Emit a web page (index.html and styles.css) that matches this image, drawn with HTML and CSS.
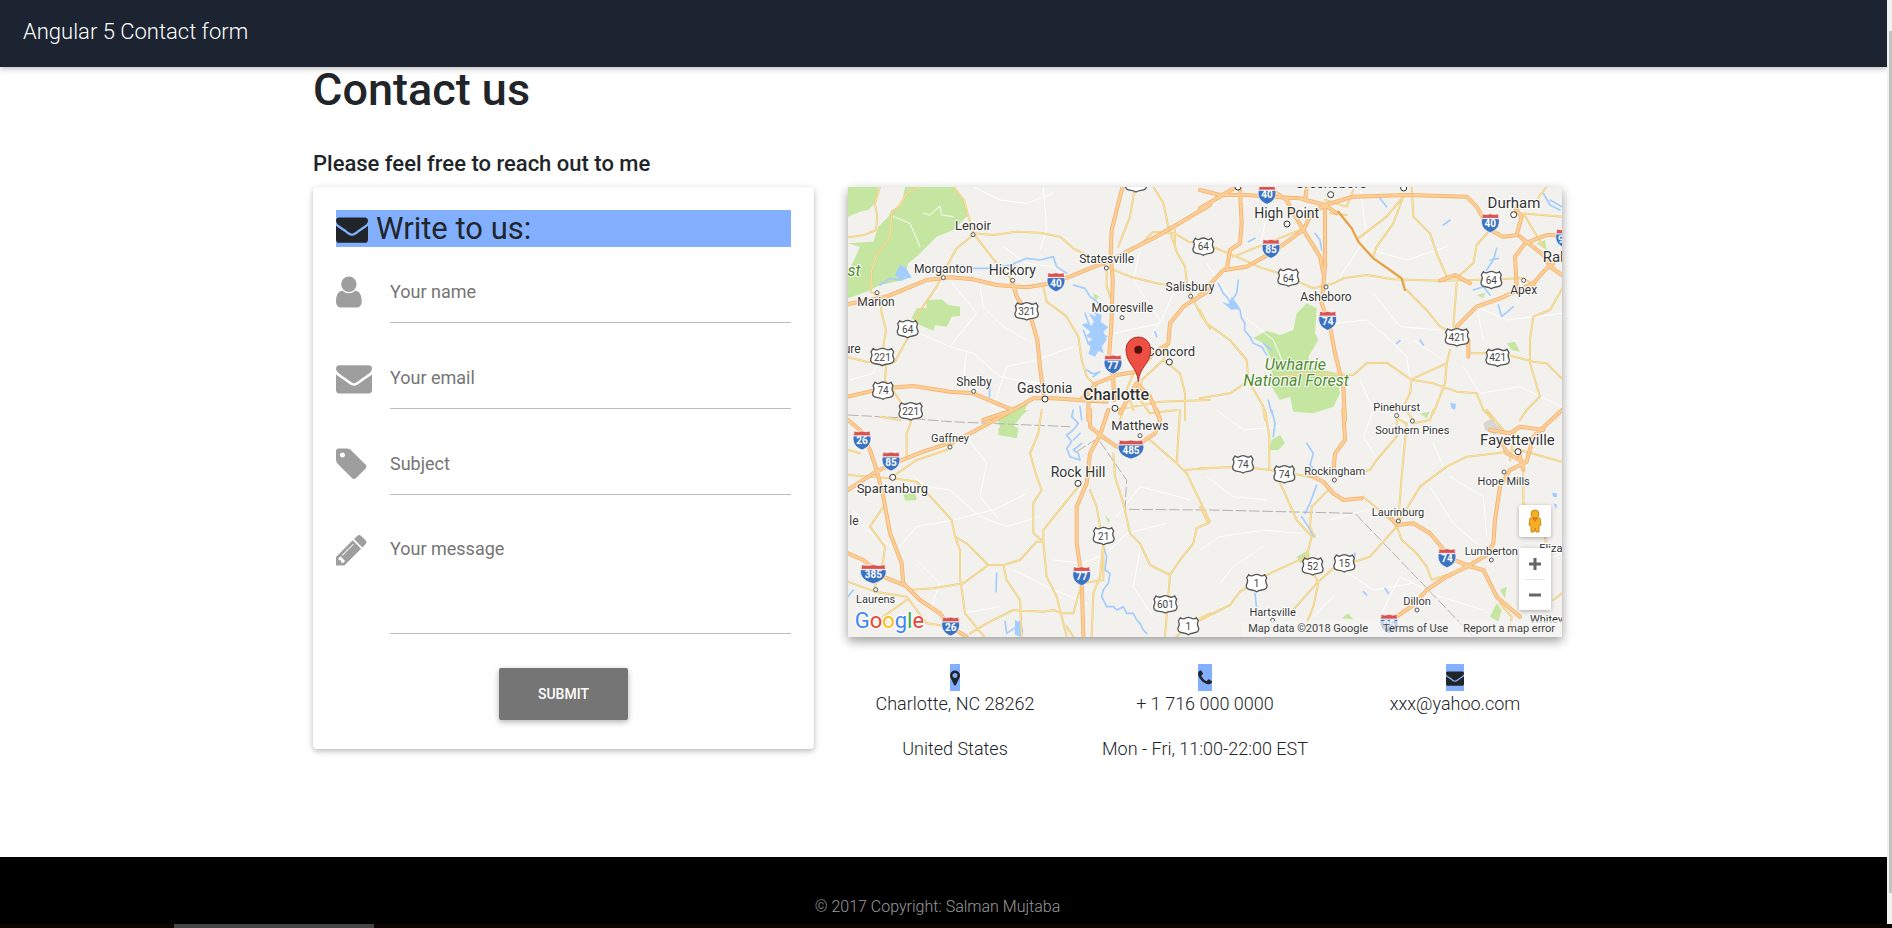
FILE: index.html
```html
<!DOCTYPE html>
<html lang="en">
<head>
<meta charset="utf-8">
<meta name="viewport" content="width=device-width, initial-scale=1">
<title>Angular 5 Contact form</title>
<link rel="stylesheet" href="styles.css">
</head>
<body>
<svg class="sprite" aria-hidden="true">
  <symbol id="i-envelope" viewBox="0 0 1792 1792"><path d="M1792 710v794q0 66-47 113t-113 47h-1472q-66 0-113-47t-47-113v-794q44 49 101 87 362 246 497 345 57 42 92.500 65.500t94.500 48 110 24.500h2q51 0 110-24.500t94.500-48 92.500-65.500q170-123 498-345 57-39 100-87zm0-294q0 79-49 151t-122 123q-376 261-468 325-10 7-42.500 31t-54 38.500-52 32.500-57.500 27-50 9h-2q-23 0-50-9t-57.500-27-52-32.500-54-38.500-42.500-31q-91-64-262-182.500t-205-142.500q-62-42-117-115.500t-55-136.500q0-78 41.500-130t118.500-52h1472q65 0 112.500 47t47.500 113z"/></symbol>
  <symbol id="i-user" viewBox="256 0 1792 1792"><path d="M1536 1399q0 109-62.500 187t-150.500 78h-854q-88 0-150.500-78t-62.500-187q0-85 8.500-160.500t31.500-152 58.500-131 94-89 134.500-34.500q131 128 313 128t313-128q76 0 134.500 34.500t94 89 58.500 131 31.500 152 8.500 160.500zm-256-887q0 159-112.500 271.500t-271.500 112.500-271.500-112.500-112.500-271.500 112.500-271.500 271.500-112.500 271.500 112.500 112.500 271.500z"/></symbol>
  <symbol id="i-tag" viewBox="128 0 1792 1792"><path d="M576 448q0-53-37.500-90.500t-90.500-37.500-90.500 37.500-37.500 90.500 37.500 90.500 90.500 37.500 90.500-37.500 37.500-90.500zm1067 576q0 53-37 90l-491 492q-39 37-91 37-53 0-90-37l-715-716q-38-37-64.500-101t-26.500-117v-416q0-52 38-90t90-38h416q53 0 117 26.500t102 64.500l715 714q37 39 37 91z"/></symbol>
  <symbol id="i-pencil" viewBox="128 0 1792 1792"><path d="M491 1536l91-91-235-235-91 91v107h128v128h107zm523-928q0-22-22-22-10 0-17 7l-542 542q-7 7-7 17 0 22 22 22 10 0 17-7l542-542q7-7 7-17zm-54-192l416 416-832 832h-416v-416zm683 96q0 53-37 90l-166 166-416-416 166-165q36-38 90-38 53 0 91 38l235 234q37 39 37 91z"/></symbol>
  <symbol id="i-marker" viewBox="384 0 1024 1792"><path d="M1152 640q0-106-75-181t-181-75-181 75-75 181 75 181 181 75 181-75 75-181zm256 0q0 109-33 179l-364 774q-16 33-47.500 52t-67.500 19-67.500-19-46.500-52l-365-774q-33-70-33-179 0-212 150-362t362-150 362 150 150 362z"/></symbol>
  <symbol id="i-phone" viewBox="192 0 1408 1792"><path d="M1600 1240q0 27-10 70.500t-21 68.500q-21 50-122 106-94 51-186 51-27 0-53-3.500t-57.500-12.500-47-14.500-55.500-20.500-49-18q-98-35-175-83-127-79-264-216t-216-264q-48-77-83-175-3-9-18-49t-20.500-55.500-14.500-47-12.500-57.500-3.500-53q0-92 51-186 56-101 106-122 25-11 68.500-21t70.500-10q14 0 21 3 18 6 53 76 11 19 30 54t35 63.500 31 53.500q3 4 17.500 25t21.500 35.500 7 28.500q0 20-28.500 50t-62 55-62 53-28.500 46q0 9 5 22.500t8.500 20.500 14 24 11.500 19q76 137 174 235t235 174q2 1 19 11.500t24 14 20.500 8.500 22.500 5q18 0 46-28.500t53-62 55-62 50-28.500q14 0 28.500 7t35.500 21.500 25 17.500q25 15 53.500 31t63.500 35 54 30q70 35 76 53 3 7 3 21z"/></symbol>
</svg>

<div class="window">
  <div class="page">
    <header class="navbar"><a class="brand" href="#">Angular 5 Contact form</a></header>

    <main class="content">
      <h1 class="title">Contact us</h1>
      <h2 class="subtitle">Please feel free to reach out to me</h2>
      <div class="columns">
        <form class="card">
          <h3 class="card-title"><svg class="card-icon"><use href="#i-envelope"/></svg>Write to us:</h3>
          <div class="fields">
            <div class="field"><label class="field-icon" for="name" aria-label="Your name"><svg class="icon"><use href="#i-user"/></svg></label><input class="input" id="name" type="text" placeholder="Your name"></div>
            <div class="field"><label class="field-icon" for="email" aria-label="Your email"><svg class="icon"><use href="#i-envelope"/></svg></label><input class="input" id="email" type="email" placeholder="Your email"></div>
            <div class="field"><label class="field-icon" for="subject" aria-label="Subject"><svg class="icon"><use href="#i-tag"/></svg></label><input class="input" id="subject" type="text" placeholder="Subject"></div>
            <div class="field"><label class="field-icon" for="message" aria-label="Your message"><svg class="icon"><use href="#i-pencil"/></svg></label><textarea class="input message" id="message" placeholder="Your message"></textarea></div>
          </div>
          <button class="submit" type="submit">SUBMIT</button>
        </form>

        <section class="side">
          <div class="map">
            <svg class="map-art" viewBox="0 0 2142 1350" preserveAspectRatio="xMidYMid slice" role="img" aria-label="Map of Charlotte, North Carolina">
              <defs>
                <g id="minor">
                  <path transform="translate(-24 -21)" d="M24 172L70 166 108 150 112 110 105 70 120 20M240 20L200 40 180 75 155 100 150 170 110 225 95 270 92 335 120 350 125 400 138 450 130 500 138 560 135 600 150 620 185 670 210 720M340 20L372 60 384 105 400 160 470 250 517 300M400 160L460 165 530 155 600 158 660 170 700 205 760 235 810 265 870 290 960 312 1050 315M400 165L350 205 320 260 290 320 235 400 205 470 165 545 130 550 80 545 24 532M885 20L870 110 835 200M940 20L970 70 985 140 1010 215 1035 260 1042 320 1080 400 1110 445M905 190L940 155 1005 160 1045 185 1110 190M1005 200L1005 150M610 320L620 365 680 410 715 470 725 540 740 590 770 620M800 270L800 320 815 360M985 490L970 540 905 600 900 660 930 700 1010 690M970 540L1020 580 1035 640 1035 720M880 580L860 630 880 690M1110 660L960 665 825 690M840 720L850 690"/>
                  <path transform="translate(1056 -21)" d="M24 195L110 230 180 262 240 280 340 325 400 310 430 295 500 285 580 298 720 302 820 300 970 295 1010 320M100 230L300 150M0 390L20 430 90 480 140 540 145 600 190 680 195 720M0 655L90 640 150 600 320 580 460 585 500 550 560 548 635 600 630 640 610 680 640 720M610 50L580 130 530 200 520 230M475 175L560 110 605 55M635 20L640 110 690 160 710 220 740 290M770 310L760 440M870 150L830 195 820 250 780 285M620 330L680 390 720 440 800 480 810 520 900 520 1000 545 1040 550 1090 600M640 595L740 550 750 510M740 550L735 610 700 700M640 600L700 610 770 635 830 640 850 690 880 720M1090 320L1050 390 1000 410 990 480 990 550 1020 650 980 690 960 720M970 100L1000 150 1030 200M375 60L440 80 460 30M390 100L440 105M970 100L1086 110M1010 60L1040 20"/>
                  <path transform="translate(-24 669)" d="M24 120L60 130M24 195L150 205 230 150 320 120 360 80M215 30L200 70 200 140M160 205L230 215 290 280 335 330 345 380 360 420 360 500 375 610 400 640 440 690M130 290L90 350 135 410 130 450 105 530M345 380L380 400 445 465 490 465 500 510 540 570 545 680M205 540L280 535 370 520 445 465M490 465L540 450 590 395 610 395 610 360 650 310 715 230M605 0L595 70 570 130 590 200 605 240 580 280 580 370 610 395 620 500 650 560 665 620 680 680M390 670L440 640 520 600 610 605 640 600 665 610 700 610 725 520M790 400L780 500 760 550 755 680M790 400L790 510 725 520M24 515L105 545 200 560 260 640 330 650M200 570L130 620M750 240L770 290 780 350M820 130L825 200 850 280 870 370 900 400 930 465 990 495 975 680M930 90L1010 160 1040 190 1110 335 1070 355 1060 400 1020 450 990 495M1020 0L1010 160M1030 180L1110 175M745 0L750 50M120 20L180 30M1110 610L1050 640 1010 680M700 680L680 650"/>
                  <path transform="translate(1056 669)" d="M0 175L130 170 210 180 300 195 350 205M195 0L208 80 208 180M225 190L250 240 290 330 335 380 320 440 355 520 340 590 320 640M390 235L335 290 330 350 345 380M0 630L90 585 120 545 200 495 320 440M270 610L350 520 400 475 480 450 510 440 590 350M490 260L560 320 590 345 605 390 650 430 680 470 695 510 770 485 820 465M590 0L590 80 530 150 510 180 440 195M590 25L620 40 605 200 595 330M600 330L660 230 740 170 800 140 890 130 960 120 1086 155M700 0L690 30 640 40M860 0L910 60M945 60L930 150M970 190L970 280 1030 340 1040 420M0 290L25 340 0 350M1086 550L1060 570M900 580L935 620 930 660"/>
                </g>
                <g id="major">
                  <path transform="translate(-24 -21)" d="M24 372L140 350 200 325 260 300 330 292 400 298 470 315 560 322 620 312 690 290 750 265 815 240 880 205 940 175 1000 140 1110 75M848 20L830 90 815 150 812 220 818 300 815 420 808 520 820 600 822 660M515 300L530 350 575 420 592 480 600 560 610 640M430 720L520 690 580 655 640 655 720 660 745 640 765 612 830 585 890 575 940 520 985 490 990 430 1030 380 1110 330M24 650L130 625 220 618 330 635 400 640 470 670 520 690M745 720L745 660M840 700L890 610 930 650 960 720M720 660L800 665"/>
                  <path transform="translate(1056 -21)" d="M0 345L70 270 140 260 220 215 310 150 335 100 375 75 460 50 620 45 800 50 830 80 870 150 910 170 950 165 965 110 945 85M960 170L1030 225 1050 260 1086 285M950 320L945 230 975 190 1040 165 1086 165M0 30L60 45 140 45 210 50 300 55 375 75 375 160 375 260 365 370 390 440 405 520 430 620 435 720M120 30L125 130 120 190 90 210 80 270M200 20L260 60 280 100 310 150 360 230 370 280M320 20L315 60 375 75 410 100M0 85L110 20M770 440L830 380 900 355 1000 310 1035 270 1060 250M720 302L765 285 810 310M805 480L805 530"/>
                  <path transform="translate(-24 669)" d="M24 30L60 60 90 120 110 180 130 260 150 370 185 460 190 520 240 570 300 610 330 650 380 680M24 240L100 190 160 160 250 125 340 95 400 65 520 0M24 430L70 450 130 500 190 525M805 0L780 75 750 130 740 220 710 290 710 400 725 500 730 680M750 0L750 50 780 75 830 110 900 100 945 70 960 30 950 0"/>
                  <path transform="translate(1056 669)" d="M430 0L435 90 405 130 400 190M330 195L370 215 400 250 430 270 485 265M570 320L590 345 640 340 690 370 740 430M590 620L640 585 680 540 740 500 800 470 860 435 880 400 885 330 900 230 930 180 980 155 1000 80 1086 0M740 440L810 470 850 480 890 560 960 620M870 60L930 70 960 50 1030 60M905 90L920 130 960 150M955 120L970 180"/>
                </g>
              </defs>

              <rect class="land" width="2142" height="1350"/>
              <g class="park">
                <path transform="translate(-24 -21)" d="M24 190L60 200 24 280V355L80 335 120 315 190 300 205 250 235 225 290 170 340 150 384 105 370 60 340 20H195L185 75 155 90 145 110 115 140 100 185 24 190ZM24 20H115L105 70 85 90 60 95 24 110Z"/>
                <path transform="translate(-24 -21)" d="M230 385L260 385 260 360 305 358 325 375 360 380 360 408 335 410 320 440 285 435 280 452 240 435 215 415ZM470 710L530 675 565 670 540 715 500 760 480 740ZM760 340L778 350 765 362Z"/>
                <path transform="translate(1056 -21)" d="M160 475L200 452 240 465 280 450 290 400 320 370 350 385 345 460 355 480 325 530 330 560 410 580 420 640 400 680 340 700 280 695 270 650 240 660 215 620 215 540 190 490ZM920 490L945 485 960 515 935 510ZM1010 190L1035 180 1040 210ZM830 345L855 338 850 355Z"/>
                <path transform="translate(-24 669)" d="M475 55L500 35 535 55 530 85 475 75ZM190 250L225 245 230 270 195 272ZM530 0L565 0 540 20ZM795 315L810 330 805 340Z"/>
                <path transform="translate(1056 669)" d="M215 90L240 75 255 100 235 120 208 120ZM290 440L325 420 330 445 300 460ZM870 620L890 580 905 600 895 635ZM900 540L920 530 915 565ZM425 625L445 610 460 628ZM660 10L690 5 680 25Z"/>
              </g>
              <path class="town" transform="translate(1056 669)" d="M850 40L875 25 890 45 905 55 885 75 855 60Z"/>
              <g class="local">
                <path transform="translate(-24 -21)" d="M250 100L270 105 300 78 305 105 340 110M160 110L210 130 240 200M400 20L480 60 560 70 640 40M610 20L620 150 600 210M420 320L430 380 490 440 560 480M240 460L330 500 400 520 480 590 600 610M330 300L410 400 370 450 330 500M490 200L560 250 640 260 700 310M460 680L500 560 590 540 700 500M900 210L880 300 960 420 930 480M1000 340L960 430 820 460M30 600L100 580 140 480M380 510L370 600 400 640"/>
                <path transform="translate(1056 -21)" d="M20 250L120 400 220 480 250 550M400 430L500 420 560 470 620 530 630 600M430 110L480 200 620 240 740 200M520 340L600 440 720 450M850 480L830 380 920 420 1086 400M480 600L520 690 620 720M640 480L730 540M790 560L840 640 960 620 1086 680M120 60L200 110 180 200M480 20L500 170 420 290"/>
                <path transform="translate(-24 669)" d="M220 200L260 230 330 240 420 320 500 350 600 320M170 420L230 350 340 330 460 300 560 250M380 80L440 160 420 260 470 320M640 450L730 460 800 430 860 370 980 340M520 480L620 530 740 580M230 450L300 520 270 600M830 320L900 230 980 250 1050 270M900 420L880 530 940 620M40 300L80 360 170 420M370 610L480 590"/>
                <path transform="translate(1056 669)" d="M20 200L100 260 200 270M0 420L60 380 190 360 300 370M390 330L500 300 560 320M430 480L520 540 640 520M750 200L850 260 860 380M690 230L760 340 830 400M540 160L490 80 520 0M700 100L730 170M540 620L600 500 720 560 850 600M60 520L100 470 190 410M400 560L340 620M50 0L130 60 240 50M960 480L1086 430"/>
              </g>
              <g class="lake">
                <path transform="translate(-24 -21)" d="M725 435L740 428 752 440 762 425 745 398 765 410 770 398 785 405 782 425 805 442 790 455 800 480 785 500 792 520 775 512 765 530 745 522 752 500 740 490 758 478 738 468 752 455ZM180 255L195 262 205 275 215 295 195 290 185 302 165 285Z"/>
                <path transform="translate(-24 669)" d="M525 630L545 640 550 665 540 680 525 675Z"/>
                <path transform="translate(1056 669)" d="M1056 248L1070 250 1072 262 1060 260ZM1060 280L1072 284 1068 298Z"/>
                <path transform="translate(1056 -21)" d="M750 668L768 672 765 690 755 685ZM65 365L85 372 95 350 110 370 120 385 95 390Z"/>
              </g>
              <g class="river">
                <path transform="translate(-24 -21)" d="M395 265L460 265 510 255 560 235 600 240 640 230 650 260 680 280M700 315L735 325 750 350 765 360 780 375 765 400M120 315L150 295 180 300 210 290M735 400L750 440 800 470M730 450L745 490M450 615L448 650M740 570L760 582 780 575 760 590M720 680L725 720M945 455L950 470"/>
                <path transform="translate(1056 -21)" d="M55 310L70 340 80 350 100 380 120 390 125 415 135 430 133 450 150 470 160 490 185 500 200 525M115 300L110 340 90 370M190 490L215 510M345 160L360 180 365 210M860 270L880 240 890 205M870 240L895 235M820 330L850 320 870 345M895 375L905 410 940 380M1030 40L1050 75 1080 90M1050 60L1086 80M730 135L750 120M205 660L215 700M540 55L560 80M590 490L600 482M660 480L670 495M145 185L165 175"/>
                <path transform="translate(-24 669)" d="M700 0L695 20 715 40 700 60 680 75 695 95 680 115 690 140 720 150 715 130 700 120 725 100M700 90L720 70M790 410L800 440 795 480 810 490 805 520 790 540 785 560 800 590 820 590 830 600 850 590 860 610 880 610 890 630 900 640 910 660 920 670M495 635L500 670 530 650 545 625M470 490L468 545M40 540L24 560"/>
                <path transform="translate(1056 669)" d="M320 100L340 130 330 165 345 180M215 0L225 40 220 80M350 225L330 280 315 310M305 320L325 350 340 380M165 550L170 595M465 430L460 460M490 545L500 555M555 535L565 550"/>
              </g>
              <path class="border" transform="translate(-24 669)" d="M24 15L210 25 330 35 690 50M710 125L765 90M780 95L860 210 855 298 1110 300 1545 310 1900 680"/>

              <use href="#minor" class="minor-edge"/><use href="#minor" class="minor-fill"/>
              <use href="#major" class="major-edge"/><use href="#major" class="major-fill"/>
              <path class="toll" transform="translate(1056 -21)" d="M415 95L455 145 475 185 520 235 570 270 605 295 615 330"/>

              <defs>
                <g id="inter"><path class="inter-blue" d="M-26-12H26C30 10 18 23 0 30C-18 23-30 10-26-12Z"/><path class="inter-red" d="M-27-13Q-22-19-25-27Q-12-22 0-27Q12-22 25-27Q22-19 27-13Z"/></g>
                <g id="inter-wide"><path class="inter-blue" d="M-38-12H38C42 10 24 24 0 30C-24 24-42 10-38-12Z"/><path class="inter-red" d="M-38-13Q-33-19-36-27Q-16-22 0-27Q16-22 36-27Q33-19 38-13Z"/></g>
                <path id="us" class="us" d="M-24-25Q-16-18-8-24Q0-28 8-24Q16-18 24-25L30-15Q24-6 31 6Q33 20 15 21Q5 22 0 26Q-5 22-15 21Q-33 20-31 6Q-24-6-30-15Z"/>
                <path id="us-wide" class="us" d="M-28-25Q-18-18-9-24Q0-28 9-24Q18-18 28-25L34-15Q28-6 35 6Q36 20 18 21Q6 22 0 26Q-6 22-18 21Q-36 20-35 6Q-28-6-34-15Z"/>
                <circle id="town" class="dot" r="6"/>
                <circle id="city" class="dot city" r="9"/>
              </defs>

              <g transform="translate(-24 -21)">
                <use href="#town" x="399" y="164"/><use href="#town" x="310" y="293"/><use href="#town" x="518" y="301"/><use href="#town" x="799" y="264"/><use href="#town" x="1052" y="349"/><use href="#town" x="846" y="413"/><use href="#town" x="111" y="338"/><use href="#town" x="401" y="634"/><use href="#city" x="615" y="657"/><use href="#city" x="988" y="546"/><use href="#city" x="825" y="685"/>
                <g class="interstate"><use href="#inter" x="648" y="305"/><text x="648" y="320">40</text><use href="#inter" x="819" y="552"/><text x="819" y="567">77</text></g>
                <g class="route"><use href="#us" x="888" y="10"/><use href="#us-wide" x="560" y="394"/><text x="560" y="405">321</text><use href="#us" x="203" y="447"/><text x="203" y="458">64</text><use href="#us-wide" x="127" y="531"/><text x="127" y="542">221</text><use href="#us" x="129" y="632"/><text x="129" y="643">74</text><use href="#us-wide" x="212" y="694"/><text x="212" y="705">221</text><use href="#us" x="1090" y="200"/><text x="1090" y="211">64</text></g>
                <g class="place">
                  <text class="t13" x="399" y="150">Lenoir</text><text class="t12" x="310" y="278">Morganton</text><text class="t14" x="517" y="285">Hickory</text><text class="t12" x="800" y="248">Statesville</text><text class="t12" x="1050" y="333">Salisbury</text><text class="t12" x="847" y="397">Mooresville</text><text class="t12" x="108" y="378">Marion</text><text class="t12 end" x="62" y="518">ure</text><text class="t12" x="402" y="617">Shelby</text><text class="t14" x="614" y="640">Gastonia</text><text class="t13" x="992" y="528">Concord</text><text class="t16 strong" x="828" y="660">Charlotte</text>
                  <text class="t16 forest end" x="62" y="288">st</text>
                </g>
              </g>
              <g transform="translate(1056 -21)">
                <use href="#city" x="114" y="21"/><use href="#city" x="392" y="44"/><use href="#city" x="611" y="24"/><use href="#city" x="261" y="132"/><use href="#city" x="941" y="104"/><use href="#town" x="378" y="321"/><use href="#town" x="971" y="301"/><use href="#town" x="590" y="707"/>
                <g class="interstate"><use href="#inter" x="201" y="43"/><text x="201" y="55">40</text><use href="#inter" x="213" y="205"/><text x="213" y="219">85</text><use href="#inter" x="871" y="128"/><text x="871" y="142">40</text><use href="#inter" x="383" y="421"/><text x="383" y="435">74</text><use href="#inter" x="1094" y="174"/><text class="start" x="1074" y="188">95</text></g>
                <g class="route"><use href="#us" x="265" y="293"/><text x="265" y="305">64</text><use href="#us" x="874" y="300"/><text x="874" y="311">64</text><use href="#us-wide" x="771" y="472"/><text x="771" y="483">421</text><use href="#us-wide" x="893" y="533"/><text x="893" y="544">421</text></g>
                <g class="place">
                  <text class="t14" x="260" y="113">High Point</text><text class="t14" x="393" y="25">Greensboro</text><text class="t15" x="942" y="83">Durham</text><text class="t15 start" x="1028" y="246">Raleigh</text><text class="t12" x="971" y="342">Apex</text><text class="t12" x="378" y="362">Asheboro</text><text class="t11" x="590" y="693">Pinehurst</text>
                  <text class="t16 forest" x="286" y="570">Uwharrie</text><text class="t16 forest" x="288" y="618">National Forest</text>
                </g>
              </g>
              <g transform="translate(-24 669)">
                <use href="#town" x="330" y="111"/><use href="#city" x="158" y="202"/><use href="#city" x="714" y="220"/><use href="#town" x="900" y="77"/><use href="#town" x="107" y="539"/>
                <g class="interstate"><use href="#inter" x="66" y="90"/><text x="66" y="103">26</text><use href="#inter" x="153" y="153"/><text x="153" y="167">85</text><use href="#inter-wide" x="873" y="117"/><text x="873" y="131">485</text><use href="#inter-wide" x="100" y="491"/><text x="100" y="505">385</text><use href="#inter" x="725" y="497"/><text x="725" y="511">77</text><use href="#inter" x="332" y="648"/><text x="332" y="662">26</text></g>
                <g class="route"><use href="#us" x="791" y="378"/><text x="791" y="390">21</text><use href="#us-wide" x="976" y="583"/><text x="976" y="595">601</text><use href="#us" x="1045" y="648"/><text x="1045" y="660">1</text></g>
                <g class="place">
                  <text class="t11" x="330" y="96">Gaffney</text><text class="t13" x="157" y="249">Spartanburg</text><text class="t14" x="714" y="201">Rock Hill</text><text class="t13" x="900" y="60">Matthews</text><text class="t12 start" x="28" y="345">le</text><text class="t11" x="107" y="579">Laurens</text>
                </g>
                <text class="logo" x="44" y="654"><tspan class="g-blue">G</tspan><tspan class="g-red">o</tspan><tspan class="g-yellow">o</tspan><tspan class="g-blue">g</tspan><tspan class="g-green">l</tspan><tspan class="g-red">e</tspan></text>
              </g>
              <g transform="translate(1056 669)">
                <use href="#town" x="637" y="33"/><use href="#city" x="954" y="125"/><use href="#town" x="912" y="186"/><use href="#town" x="403" y="210"/><use href="#town" x="595" y="333"/><use href="#town" x="874" y="450"/><use href="#town" x="651" y="600"/><use href="#town" x="218" y="631"/>
                <g class="interstate"><use href="#inter" x="741" y="443"/><text x="741" y="457">74</text><use href="#inter" x="567" y="640"/><text x="567" y="654">95</text></g>
                <g class="route"><use href="#us" x="129" y="163"/><text x="129" y="174">74</text><use href="#us" x="253" y="193"/><text x="253" y="204">74</text><use href="#us" x="338" y="469"/><text x="338" y="480">52</text><use href="#us" x="433" y="460"/><text x="433" y="471">15</text><use href="#us" x="170" y="519"/><text x="170" y="531">1</text></g>
                <g class="place">
                  <text class="t11" x="637" y="72">Southern Pines</text><text class="t15" x="952" y="104">Fayetteville</text><text class="t11" x="911" y="225">Hope Mills</text><text class="t11" x="404" y="195">Rockingham</text><text class="t11" x="594" y="318">Laurinburg</text><text class="t11" x="874" y="435">Lumberton</text><text class="t11 start" x="1018" y="425">Elizabethtown</text><text class="t11" x="651" y="585">Dillon</text><text class="t11" x="218" y="617">Hartsville</text><text class="t11 start" x="990" y="639">Whiteville</text>
                </g>
              </g>
              <g class="pin" transform="translate(-24 -21)"><path d="M895 605C892 560 858 552 858 508A37 37 0 0 1 932 508C932 552 898 560 895 605Z"/><circle cx="895" cy="509" r="12"/></g>
            </svg>
            <div class="controls">
              <button class="pegman" type="button" aria-label="Street View"><svg viewBox="0 0 16 24"><circle cx="8" cy="5" r="4"/><path d="M3 9H13L14 16 12 17V23H9L8 19 7 23H4V17L2 16Z"/><path class="pegman-shade" d="M5 9L8 13 11 9Z"/></svg></button>
              <div class="zoom">
                <button type="button" aria-label="Zoom in"><svg viewBox="0 0 12 12"><path d="M0 6H12M6 0V12"/></svg></button>
                <button type="button" aria-label="Zoom out"><svg viewBox="0 0 12 12"><path d="M0 6H12"/></svg></button>
              </div>
            </div>
            <div class="attribution"><span>Map data ©2018 Google</span><a href="#">Terms of Use</a><a href="#">Report a map error</a></div>
          </div>

          <div class="contacts">
            <div class="contact"><span class="badge"><svg class="marker"><use href="#i-marker"/></svg></span><p>Charlotte, NC 28262</p><p>United States</p></div>
            <div class="contact"><span class="badge"><svg class="phone"><use href="#i-phone"/></svg></span><p>+ 1 716 000 0000</p><p>Mon - Fri, 11:00-22:00 EST</p></div>
            <div class="contact"><span class="badge"><svg class="mail"><use href="#i-envelope"/></svg></span><p>xxx@yahoo.com</p></div>
          </div>
        </section>
      </div>
    </main>

    <footer class="footer">© 2017 Copyright: Salman Mujtaba</footer>
  </div>
  <div class="scroll-track"><div class="scroll-thumb"></div></div>
</div>
<div class="taskbar"><div class="taskbar-item"></div></div>
</body>
</html>
```
FILE: styles.css
```css
* { box-sizing: border-box; }
body {
  margin: 0;
  min-height: 100vh;
  display: flex;
  flex-direction: column;
  background: #fff;
  color: #212529;
  font: 300 18px/26px Roboto, "Liberation Sans", sans-serif;
}
h1, h2, h3, p { margin: 0; }
.sprite { position: absolute; width: 0; height: 0; }

.window { flex: 1; display: grid; grid-template-columns: 1fr 5px; }
.page { display: flex; flex-direction: column; min-width: 0; }
.navbar {
  height: 67px;
  padding: 19px 23px;
  background: #1c2331;
  box-shadow: 0 2px 6px rgba(0, 0, 0, .25);
}
.brand { color: #fff; font-size: 22px; text-decoration: none; }

.content {
  width: 100%;
  max-width: 1261px;
  margin: 0 auto;
  padding: 0 12px 95px 0;
}
.title { font-size: 45px; line-height: 45px; font-weight: 500; }
.subtitle { margin: 39px 0 10px; font-size: 22px; line-height: 26px; font-weight: 500; }
.columns { display: grid; grid-template-columns: 501fr 714fr; gap: 34px; align-items: start; }

.card {
  display: flex;
  flex-direction: column;
  padding: 23px 23px 29px;
  border-radius: 4px;
  background: #fff;
  box-shadow: 0 2px 5px rgba(0, 0, 0, .2), 0 2px 10px rgba(0, 0, 0, .1);
}
.card-title {
  display: flex;
  align-items: center;
  gap: 8px;
  height: 37px;
  background: #82b0ff;
  font-size: 31px;
  line-height: 37px;
  font-weight: 400;
}
.card-icon { width: 32px; height: 32px; fill: #212529; }
.fields { display: grid; gap: 24px; margin-top: 14px; }
.field { display: grid; grid-template-columns: 54px 1fr; }
.field-icon { display: flex; align-items: center; height: 62px; }
.icon { width: 36px; height: 36px; fill: #9e9e9e; }
.input {
  width: 100%;
  height: 62px;
  padding: 0;
  border: 0;
  border-bottom: 1px solid #bdbdbd;
  border-radius: 0;
  outline: 0;
  background: transparent;
  color: #495057;
  font: 400 18px/22px Roboto, "Liberation Sans", sans-serif;
}
.input::placeholder { color: #757575; opacity: 1; }
.message { display: block; height: 115px; padding-top: 19px; resize: none; }
.submit {
  align-self: center;
  width: 129px;
  height: 52px;
  margin-top: 34px;
  padding: 0;
  border: 0;
  border-radius: 2px;
  background: #757575;
  box-shadow: 0 2px 5px rgba(0, 0, 0, .2), 0 2px 8px rgba(0, 0, 0, .12);
  color: #fff;
  font: 500 14px/20px Roboto, "Liberation Sans", sans-serif;
}

.map {
  position: relative;
  height: 450px;
  overflow: hidden;
  background: #f2f1ed;
}
.side { min-width: 0; }
.side .map { box-shadow: 0 4px 10px rgba(0, 0, 0, .4); }
.map-art { display: block; width: 100%; height: 100%; font-family: Roboto, "Liberation Sans", sans-serif; }
.land { fill: #f2f1ee; }
.park { fill: #c5e6a1; }
.town { fill: #d9d6d1; }
.lake { fill: #a3ccff; }
.local, .river, .border, .toll, .minor-edge, .minor-fill, .major-edge, .major-fill { fill: none; stroke-linejoin: round; stroke-linecap: round; }
.local { stroke: #fff; stroke-width: 3; }
.river { stroke: #a3ccff; stroke-width: 5; }
.border { stroke: #b4b2b0; stroke-width: 3; stroke-dasharray: 32 8; stroke-linecap: butt; }
.minor-edge { stroke: #ebcb80; stroke-width: 6; }
.minor-fill { stroke: #fae3a0; stroke-width: 3; }
.major-edge { stroke: #f4b26c; stroke-width: 12; }
.major-fill { stroke: #fdcf98; stroke-width: 7; }
.toll { stroke: #e8a243; stroke-width: 7; }
.dot { fill: #fff; stroke: #555; stroke-width: 3; }
.city { stroke: #333; }
.inter-blue { fill: #3b73c2; stroke: #fff; stroke-width: 2; }
.inter-red { fill: #d8534f; stroke: #fff; stroke-width: 2; }
.interstate text { fill: #fff; font-size: 30px; font-weight: 700; text-anchor: middle; }
.us { fill: #fff; stroke: #555; stroke-width: 4; }
.route text { fill: #444; font-size: 30px; font-weight: 400; text-anchor: middle; }
.place text { fill: #333; stroke: #fff; stroke-width: 6px; stroke-linejoin: round; paint-order: stroke; font-weight: 400; text-anchor: middle; }
.place .t11 { font-size: 33px; }
.place .t12 { font-size: 36px; }
.place .t13 { font-size: 39px; }
.place .t14 { font-size: 42px; }
.place .t15 { font-size: 45px; }
.place .t16 { font-size: 48px; }
.place .strong { font-weight: 500; }
.place .forest { fill: #4f8a2d; font-style: italic; }
.place .start, .interstate .start { text-anchor: start; }
.place .end { text-anchor: end; }
.logo { font-size: 66px; font-weight: 400; stroke: #fff; stroke-width: 6px; paint-order: stroke; }
.g-blue { fill: #4285f4; }
.g-red { fill: #ea4335; }
.g-yellow { fill: #fbbc05; }
.g-green { fill: #34a853; }
.pin path { fill: #ee4f45; stroke: #a93128; stroke-width: 3; }
.pin circle { fill: #50100d; }

.controls { position: absolute; right: 11px; bottom: 27px; display: grid; gap: 11px; }
.controls button {
  display: grid;
  place-items: center;
  width: 32px;
  height: 31px;
  padding: 0;
  border: 0;
  background: #fff;
}
.controls .pegman, .zoom { border-radius: 2px; box-shadow: 0 1px 4px rgba(0, 0, 0, .3); }
.controls .pegman { height: 32px; }
.pegman svg { width: 16px; height: 24px; fill: #f5b021; stroke: #c98a16; stroke-width: 1; }
.pegman .pegman-shade { fill: #e5761c; stroke: none; }
.zoom { background: #fff; }
.zoom button + button { position: relative; }
.zoom button + button::before { content: ""; position: absolute; top: 0; left: 6px; right: 6px; height: 1px; background: #e6e6e6; }
.zoom svg { width: 12px; height: 12px; stroke: #666; stroke-width: 3; }
.attribution {
  position: absolute;
  right: 0;
  bottom: 0;
  display: flex;
  gap: 15px;
  padding: 0 7px;
  background: rgba(245, 245, 245, .7);
  color: #444;
  font-size: 11px;
  line-height: 16px;
  font-weight: 400;
}
.attribution a { color: inherit; text-decoration: none; }

.contacts { display: grid; grid-template-columns: repeat(3, 1fr); margin: 27px -18px 0; text-align: center; }
.contact p + p { margin-top: 19px; }
.badge { display: flex; align-items: center; width: fit-content; height: 27px; margin: 0 auto; background: #82b0ff; }
.badge svg { height: 18px; fill: #212529; }
.marker { width: 10px; }
.phone { width: 14px; }
.mail { width: 18px; }

.footer {
  flex: 1;
  padding: 38px 12px 0 0;
  background: #000;
  color: rgba(255, 255, 255, .6);
  font-size: 16px;
  line-height: 24px;
  text-align: center;
}
.scroll-track { padding: 31px 0 31px 2px; background: #f1f1f1; }
.scroll-thumb { height: 100%; background: #c1c1c1; }
.taskbar { height: 4px; padding-left: 174px; background: #0c0502; }
.taskbar-item { width: 200px; height: 4px; background: #444; }
```
